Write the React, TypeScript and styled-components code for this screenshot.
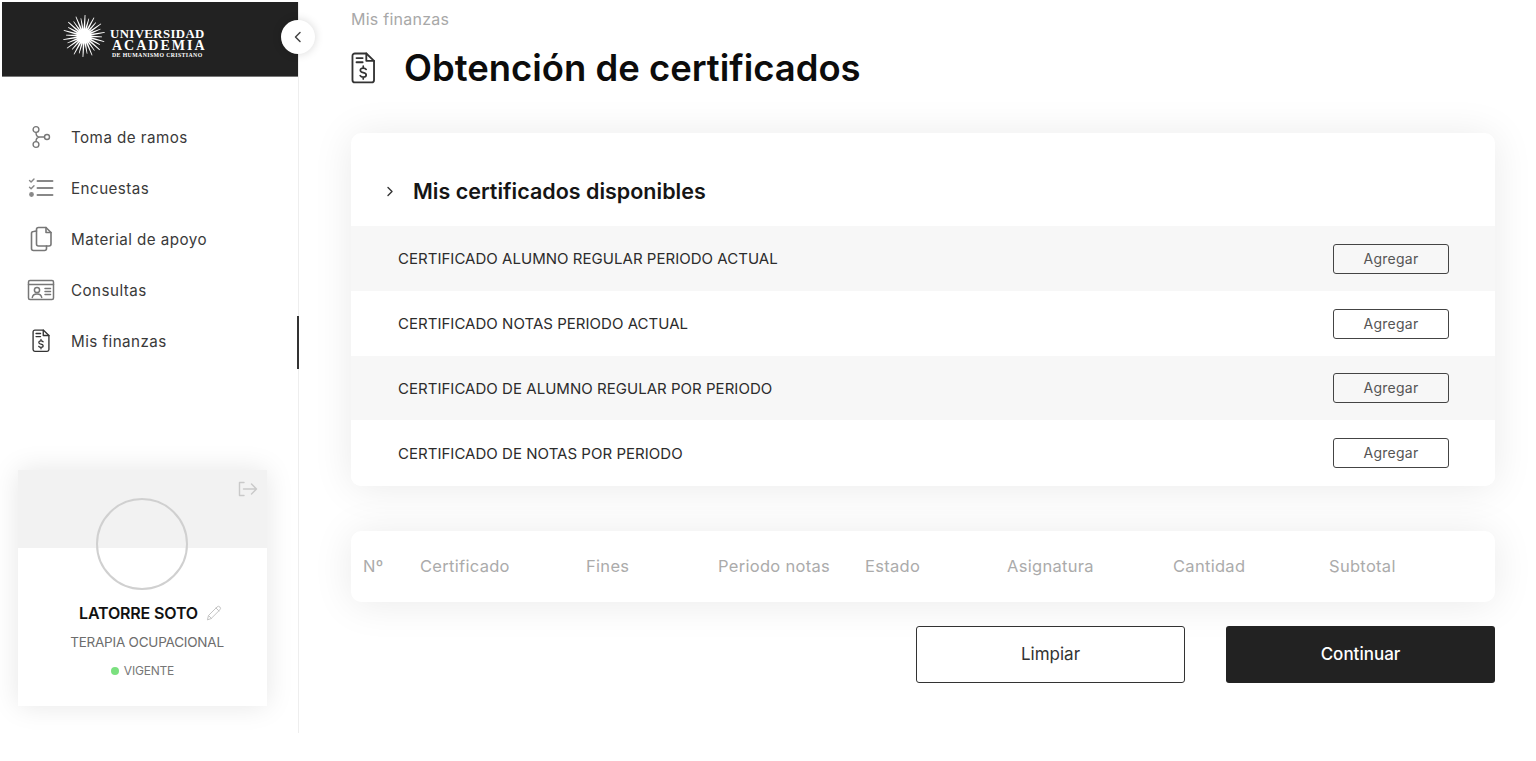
import React from "react";
import styled, { createGlobalStyle } from "styled-components";

const Global = createGlobalStyle`
  html, body { margin: 0; padding: 0; background: #fff; }
  body { font-family: Inter, "Noto Sans", sans-serif; color: #222; }
  * { box-sizing: border-box; }
`;

const Page = styled.div`
  display: flex;
  align-items: flex-start;
  width: 1536px;
  height: 761px;
  overflow: hidden;
`;

const Sidebar = styled.aside`
  position: relative;
  display: flex;
  flex-direction: column;
  flex: none;
  width: 297px;
  height: 731px;
  margin: 2px 0 0 2px;
  padding-bottom: 27px;
  border-right: 1px solid #eeeeee;
`;

const Brand = styled.div`
  display: flex;
  align-items: center;
  gap: 4px;
  height: 75px;
  padding: 0 0 6px 60px;
  background: #222222;
  border-bottom: 1px solid #777;
`;

const BrandWords = styled.div`
  display: flex;
  flex-direction: column;
  align-items: stretch;
  width: 96px;
  padding-top: 14px;
  color: #fff;
  font-family: "Liberation Serif", serif;
  font-weight: 700;
`;

const BrandLine = styled.span<{ $size: number; $spacing: number; $height: number; $indent: number }>`
  padding-left: ${(p) => p.$indent}px;
  font-size: ${(p) => p.$size}px;
  letter-spacing: ${(p) => p.$spacing}px;
  line-height: ${(p) => p.$height}px;
  white-space: nowrap;
`;

const CollapseButton = styled.button`
  position: absolute;
  top: 18px;
  left: 279px;
  display: flex;
  align-items: center;
  justify-content: center;
  width: 34px;
  height: 34px;
  padding: 0;
  border: 0;
  border-radius: 50%;
  background: #fff;
  box-shadow: 0 0 10px rgba(0, 0, 0, 0.16);
  color: #444;
`;

const Nav = styled.nav`
  display: flex;
  flex-direction: column;
  margin-top: 35px;
`;

const NavItem = styled.a<{ $active?: boolean }>`
  position: relative;
  display: flex;
  align-items: center;
  height: 51px;
  padding: 0 0 1px 25px;
  color: #3a3a3a;
  font-size: 15.2px;
  letter-spacing: 0.45px;
  &::after {
    content: "";
    display: ${(p) => (p.$active ? "block" : "none")};
    position: absolute;
    top: 0;
    right: -1px;
    width: 2px;
    height: 53px;
    background: #333;
  }
`;

const NavIcon = styled.span`
  display: flex;
  align-items: center;
  justify-content: center;
  flex: none;
  width: 28px;
  margin-right: 16px;
`;

const Profile = styled.section`
  position: relative;
  display: flex;
  flex-direction: column;
  align-items: center;
  width: 249px;
  height: 236px;
  margin: auto 0 0 16px;
  box-shadow: 0 0 26px rgba(0, 0, 0, 0.1);
  background: linear-gradient(#f2f2f2 0 78px, #fff 78px);
`;

const LogoutIcon = styled.span`
  position: absolute;
  top: 11px;
  right: 9px;
  display: flex;
  color: #c9c9c9;
`;

const Avatar = styled.div`
  width: 92px;
  height: 92px;
  margin: 28px 2px 0 0;
  border: 2px solid #d0d0d0;
  border-radius: 50%;
`;

const ProfileName = styled.div`
  display: flex;
  align-items: center;
  gap: 8px;
  margin-top: 13px;
  padding-left: 16px;
  color: #111;
  font-size: 16px;
  line-height: 20px;
  font-weight: 600;
  letter-spacing: -0.15px;
`;

const Career = styled.div`
  margin-top: 9px;
  padding-left: 9px;
  color: #6d6d6d;
  font-size: 13.5px;
  line-height: 20px;
  letter-spacing: -0.22px;
`;

const Status = styled.div`
  display: flex;
  align-items: center;
  gap: 5px;
  margin-top: 9px;
  color: #777;
  font-size: 12px;
  line-height: 20px;
  letter-spacing: -0.2px;
`;

const StatusDot = styled.i`
  width: 8px;
  height: 8px;
  border-radius: 50%;
  background: #7be07f;
`;

const Main = styled.main`
  display: flex;
  flex-direction: column;
  flex: none;
  width: 1237px;
  padding: 9px 41px 0 52px;
`;

const Crumb = styled.div`
  color: #a8a8a8;
  font-size: 16px;
  line-height: 20px;
  letter-spacing: 0.25px;
`;

const TitleRow = styled.div`
  display: flex;
  align-items: center;
  height: 42px;
  margin-top: 18px;
`;

const TitleIcon = styled.span`
  display: flex;
  flex: none;
  width: 53px;
  color: #333;
`;

const Title = styled.h1`
  margin: 0;
  color: #0c0c0c;
  font-size: 36.45px;
  line-height: 42px;
  font-weight: 600;
  letter-spacing: 0;
  white-space: nowrap;
`;

const Card = styled.section`
  background: #fff;
  border-radius: 10px;
  box-shadow: 0 2px 40px rgba(0, 0, 0, 0.085);
  overflow: hidden;
`;

const CertificatesCard = styled(Card)`
  margin-top: 44px;
`;

const CardHeader = styled.header`
  display: flex;
  align-items: center;
  height: 93px;
  padding: 23px 0 0 35px;
`;

const HeaderTitle = styled.h2`
  margin: 0 0 0 19px;
  color: #151515;
  font-size: 21.5px;
  font-weight: 600;
  letter-spacing: 0;
`;

const Row = styled.div<{ $shaded: boolean; $height: number }>`
  display: flex;
  align-items: center;
  justify-content: space-between;
  height: ${(p) => p.$height}px;
  padding: 0 46px 0 47px;
  background: ${(p) => (p.$shaded ? "#f7f7f7" : "#fff")};
  color: #2c2c2c;
  font-size: 15px;
  letter-spacing: 0.03px;
`;

const AddButton = styled.button`
  width: 116px;
  height: 30px;
  padding: 0 0 1px;
  border: 1px solid #444;
  border-radius: 3px;
  background: transparent;
  color: #555;
  font: 400 14px Inter, sans-serif;
  letter-spacing: 0.25px;
`;

const TableHead = styled(Card)`
  display: grid;
  grid-template-columns: 57px 166px 132px 147px 142px 166px 156px 1fr;
  align-items: center;
  height: 71px;
  margin-top: 45px;
  padding: 0 0 2px 12px;
  color: #ababab;
  font-size: 16.5px;
  letter-spacing: 0.3px;
  white-space: nowrap;
`;

const Actions = styled.div`
  display: flex;
  justify-content: flex-end;
  gap: 41px;
  margin-top: 24px;
`;

const ActionButton = styled.button<{ $primary?: boolean }>`
  width: 269px;
  height: 57px;
  padding: 0 0 2px;
  border: ${(p) => (p.$primary ? "0" : "1px solid #333")};
  border-radius: 3px;
  background: ${(p) => (p.$primary ? "#222222" : "#fff")};
  color: ${(p) => (p.$primary ? "#fff" : "#333")};
  font: ${(p) => (p.$primary ? 500 : 400)} 17px Inter, sans-serif;
`;

const Sun = () => {
  const rays = Array.from({ length: 28 }, (_, i) => {
    const a = (i / 28) * Math.PI * 2 + 0.05;
    const r = i % 2 ? 21 : 18;
    const w = 0.075;
    const pt = (rad: number, ang: number) => `${(22 + rad * Math.cos(ang)).toFixed(2)},${(22 + rad * Math.sin(ang)).toFixed(2)}`;
    return `${pt(6, a - w * 2)} ${pt(r, a - 0.018)} ${pt(r, a + 0.018)} ${pt(6, a + w * 2)}`;
  });
  return (
    <svg width="44" height="44" viewBox="0 0 44 44" aria-hidden="true">
      <circle cx="22" cy="22" r="7.5" fill="#fff" />
      {rays.map((p) => (
        <polygon key={p} points={p} fill="#fff" />
      ))}
    </svg>
  );
};

const stroke = { fill: "none", stroke: "currentColor", strokeWidth: 1.4, strokeLinecap: "round", strokeLinejoin: "round" } as const;

const BranchIcon = () => (
  <svg width="24" height="24" viewBox="0 0 24 24" style={{ color: "#777" }} {...stroke}>
    <circle cx="7" cy="4.5" r="2.9" />
    <circle cx="7" cy="19.5" r="2.9" />
    <circle cx="18" cy="12" r="2.5" />
    <path d="M7 7.4c0 2.6 1.5 4.6 4 4.6h4.5M11 12c-2.5 0-4 1.6-4 4.6" />
  </svg>
);

const ListIcon = () => (
  <svg width="26" height="20" viewBox="0 0 26 20" style={{ color: "#888" }} {...stroke}>
    <path d="M1.5 2.5l1.6 1.6L6 1M1.5 9.2l1.6 1.6L6 7.7" />
    <circle cx="3.5" cy="16.5" r="1.7" fill="currentColor" />
    <path strokeWidth="1.9" d="M9.5 3h15M9.5 10h15M9.5 17h15" />
  </svg>
);

const CopyIcon = () => (
  <svg width="24" height="26" viewBox="0 0 24 26" style={{ color: "#777" }} {...stroke} strokeWidth="1.6">
    <path d="M9.5 1.5h7.5l5 5v11.5a2 2 0 0 1-2 2H9.5a2 2 0 0 1-2-2V3.5a2 2 0 0 1 2-2z" />
    <path d="M17 1.5v5h5" />
    <path d="M7.5 5L4.5 5.5a2 2 0 0 0-2 2v15a2 2 0 0 0 2 2h11a2 2 0 0 0 2-2V20" />
  </svg>
);

const IdCardIcon = () => (
  <svg width="28" height="22" viewBox="0 0 28 22" style={{ color: "#777" }} {...stroke} strokeWidth="1.5">
    <rect x="1.5" y="1.5" width="25" height="19" rx="1.5" />
    <path d="M1.5 5.5h25" />
    <circle cx="10" cy="11" r="2.6" />
    <path d="M5.3 18.5c.3-2.5 2-3.6 4.7-3.6s4.4 1.1 4.7 3.6M18 9.5h5.5M18 12.5h5.5M18 15.5h5.5" />
  </svg>
);

const InvoiceIcon = ({ width }: { width: number }) => (
  <svg width={width} height={width * 1.3} viewBox="0 0 20 26" style={{ color: "#333" }} {...stroke} strokeWidth="1.5">
    <path d="M3.2 1.2h9.3l6.3 6v15.6a2 2 0 0 1-2 2H3.2a2 2 0 0 1-2-2V3.2a2 2 0 0 1 2-2z" />
    <path d="M12.5 1.2v6h6.3M4.5 5h5M4.5 8.4h5" />
    <path strokeWidth="1.4" d="M12.4 14.2c-.5-.7-1.3-1.1-2.4-1.1-1.4 0-2.4.7-2.4 1.8s.9 1.6 2.4 1.9 2.4.8 2.4 1.9-1 1.8-2.4 1.8c-1.1 0-2-.4-2.5-1.2M10 11.6v1.5M10 20.5v1.5" />
  </svg>
);

const Logout = () => (
  <svg width="20" height="16" viewBox="0 0 20 16" {...stroke}>
    <path d="M6 1.5H1.5v13H6M5.5 8h13M13.5 3l5 5-5 5" />
  </svg>
);

const Pencil = () => (
  <svg width="16" height="16" viewBox="0 0 16 16" style={{ color: "#c4c4c4" }} {...stroke} strokeWidth="1">
    <path d="M1.5 14.5l1-4L11 2a1.9 1.9 0 0 1 2.9 2.8L5.4 13.3zM2.5 10.5l3 3M10 3l3 3" />
  </svg>
);

const ChevronLeft = () => (
  <svg width="10" height="12" viewBox="0 0 10 12" {...stroke} strokeWidth="1.5">
    <path d="M7 1.5L2.5 6 7 10.5" />
  </svg>
);

const ChevronRight = () => (
  <svg width="8" height="11" viewBox="0 0 8 11" style={{ color: "#333" }} {...stroke}>
    <path d="M2 1.5L6 5.5 2 9.5" />
  </svg>
);

const navItems = [
  { label: "Toma de ramos", icon: <BranchIcon /> },
  { label: "Encuestas", icon: <ListIcon /> },
  { label: "Material de apoyo", icon: <CopyIcon /> },
  { label: "Consultas", icon: <IdCardIcon /> },
  { label: "Mis finanzas", icon: <InvoiceIcon width={18} />, active: true },
];

const certificates = [
  { label: "CERTIFICADO ALUMNO REGULAR PERIODO ACTUAL", height: 65 },
  { label: "CERTIFICADO NOTAS PERIODO ACTUAL", height: 65 },
  { label: "CERTIFICADO DE ALUMNO REGULAR POR PERIODO", height: 64 },
  { label: "CERTIFICADO DE NOTAS POR PERIODO", height: 66 },
];

const columns = ["Nº", "Certificado", "Fines", "Periodo notas", "Estado", "Asignatura", "Cantidad", "Subtotal"];

export default function App() {
  return (
    <Page>
      <Global />
      <Sidebar>
        <Brand>
          <Sun />
          <BrandWords>
            <BrandLine $size={12.8} $spacing={0.4} $height={12} $indent={0}>UNIVERSIDAD</BrandLine>
            <BrandLine $size={14} $spacing={2} $height={12} $indent={2}>ACADEMIA</BrandLine>
            <BrandLine $size={5.8} $spacing={0.4} $height={7} $indent={2}>DE HUMANISMO CRISTIANO</BrandLine>
          </BrandWords>
        </Brand>
        <CollapseButton aria-label="Contraer menú">
          <ChevronLeft />
        </CollapseButton>
        <Nav>
          {navItems.map((item) => (
            <NavItem key={item.label} $active={item.active}>
              <NavIcon>{item.icon}</NavIcon>
              {item.label}
            </NavItem>
          ))}
        </Nav>
        <Profile>
          <LogoutIcon>
            <Logout />
          </LogoutIcon>
          <Avatar />
          <ProfileName>
            LATORRE SOTO
            <Pencil />
          </ProfileName>
          <Career>TERAPIA OCUPACIONAL</Career>
          <Status>
            <StatusDot />
            VIGENTE
          </Status>
        </Profile>
      </Sidebar>
      <Main>
        <Crumb>Mis finanzas</Crumb>
        <TitleRow>
          <TitleIcon>
            <InvoiceIcon width={24.5} />
          </TitleIcon>
          <Title>Obtención de certificados</Title>
        </TitleRow>
        <CertificatesCard>
          <CardHeader>
            <ChevronRight />
            <HeaderTitle>Mis certificados disponibles</HeaderTitle>
          </CardHeader>
          {certificates.map((c, i) => (
            <Row key={c.label} $shaded={i % 2 === 0} $height={c.height}>
              {c.label}
              <AddButton>Agregar</AddButton>
            </Row>
          ))}
        </CertificatesCard>
        <TableHead>
          {columns.map((c) => (
            <span key={c}>{c}</span>
          ))}
        </TableHead>
        <Actions>
          <ActionButton>Limpiar</ActionButton>
          <ActionButton $primary>Continuar</ActionButton>
        </Actions>
      </Main>
    </Page>
  );
}
